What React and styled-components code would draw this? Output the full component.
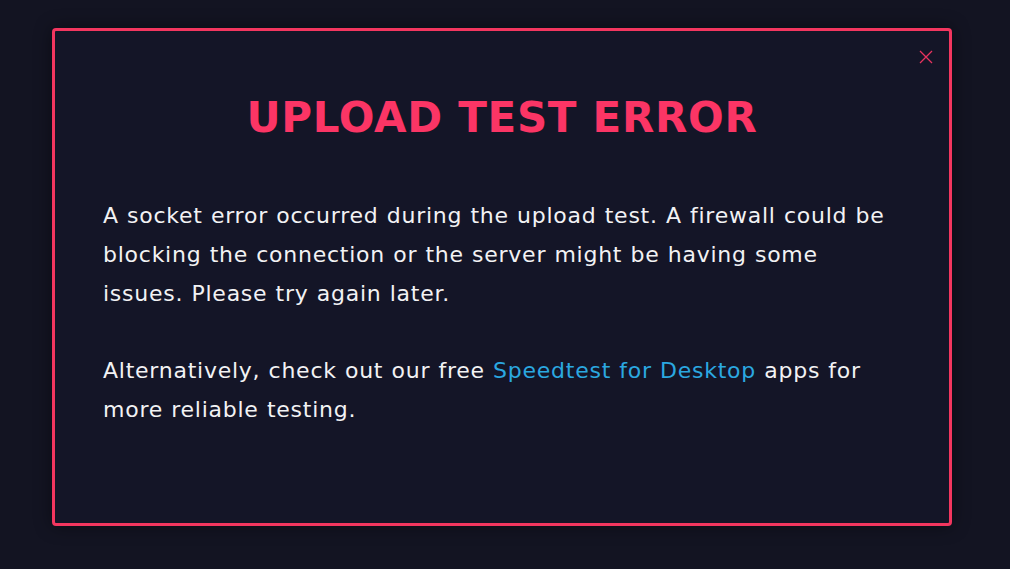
import styled, { createGlobalStyle } from 'styled-components';

const GlobalStyle = createGlobalStyle`
  html, body {
    margin: 0;
    padding: 0;
    background: #131422;
  }
  body {
    font-family: "DejaVu Sans", "Open Sans", sans-serif;
  }
`;

export default function App() {
  return (
    <>
      <GlobalStyle />
      <Page>
        <Modal>
          <CloseButton aria-label='Close'>
            <svg width='14' height='14' viewBox='0 0 14 14'>
              <path d='M1 1 L13 13 M13 1 L1 13' stroke='#e8335f' strokeWidth='1.3' />
            </svg>
          </CloseButton>
          <Title>UPLOAD TEST ERROR</Title>
          <Body>
            <p>
              A socket error occurred during the upload test. A firewall could be
              blocking the connection or the server might be having some issues.
              Please try again later.
            </p>
            <p>
              Alternatively, check out our free <a href='#'>Speedtest for Desktop</a>{' '}
              apps for more reliable testing.
            </p>
          </Body>
        </Modal>
      </Page>
    </>
  );
}

const Page = styled.div`
  width: 1010px;
  height: 569px;
  box-sizing: border-box;
  padding: 28px 58px 0 52px;
`;

const Modal = styled.section`
  position: relative;
  box-sizing: border-box;
  width: 900px;
  height: 498px;
  border: 3px solid #f3365f;
  border-radius: 4px;
  background: #141527;
  box-shadow: 0 0 18px rgba(0, 0, 0, 0.45);
  padding: 58px 48px 0 48px;
`;

const CloseButton = styled.button`
  position: absolute;
  top: 19px;
  right: 16px;
  border: none;
  background: none;
  padding: 0;
  cursor: pointer;
  display: flex;
`;

const Title = styled.h1`
  margin: 0;
  text-align: center;
  color: #fb3565;
  font-size: 42px;
  font-weight: 700;
  line-height: 58px;
  letter-spacing: 0.7px;
`;

const Body = styled.div`
  margin-top: 49px;
  color: #f2f2f4;
  font-size: 22px;
  line-height: 39px;
  letter-spacing: 0.75px;
  word-spacing: 0.5px;

  p {
    margin: 0 0 38px 0;
  }

  a {
    color: #2ba8e0;
    text-decoration: none;
  }
`;
